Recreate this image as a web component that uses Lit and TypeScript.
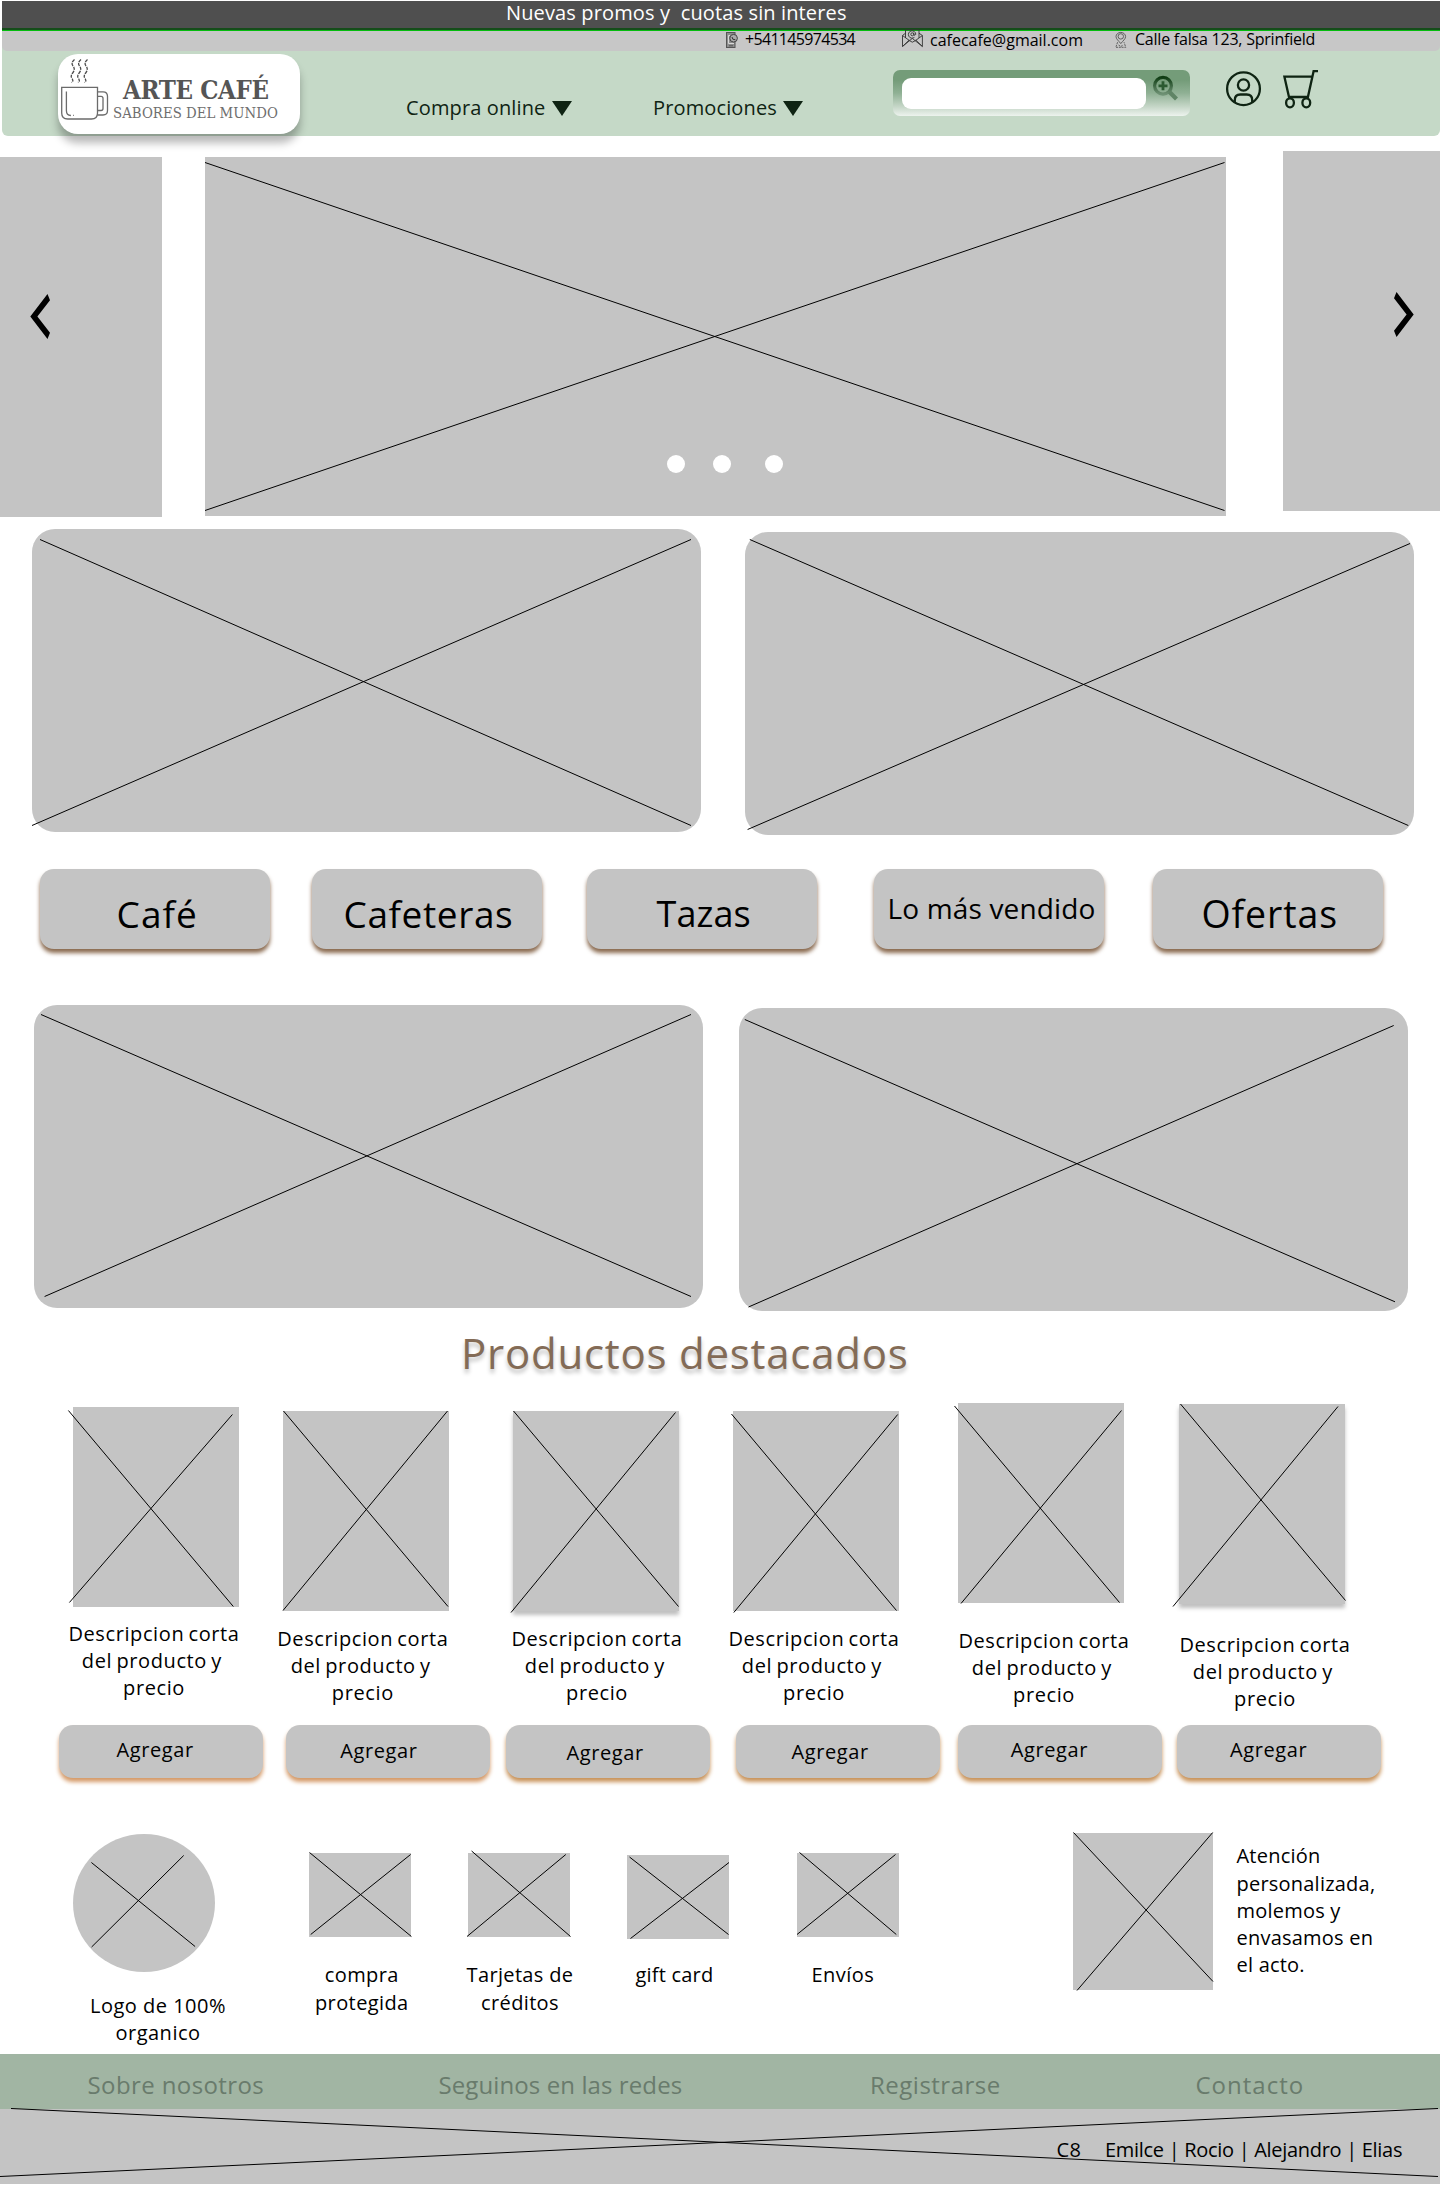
import { LitElement, html, css, svg } from "lit";
import { customElement, property } from "lit/decorators.js";

type Line = [number, number, number, number];

/** Grey image placeholder crossed by two diagonals. */
@customElement("image-slot")
export class ImageSlot extends LitElement {
  @property({ attribute: false }) lines: Line[] = [];

  static styles = css`
    :host { display: block; position: relative; background: #c4c4c4; flex: none; box-sizing: border-box; }
    .cross { position: absolute; left: 0; top: 0; width: 100%; height: 100%; overflow: visible; }
    .cross line { stroke: #000; stroke-width: 1; }
  `;

  render() {
    return html`<svg class="cross">
        ${this.lines.map(([a, b, c, d]) => svg`<line x1=${a} y1=${b} x2=${c} y2=${d}></line>`)}
      </svg><slot></slot>`;
  }
}

const products: Line[][] = [
  [[-4.6, 3.5, 160.3, 199.5], [-3.6, 195.5, 159.4, 7.5]],
  [[0.5, 0, 165, 195.5], [0, 199.5, 164.5, 0]],
  [[0.5, 0, 165.5, 195.5], [-2, 201.5, 162.5, 1.5]],
  [[-1.5, 3, 163.5, 199.5], [0.8, 201.5, 164.7, 3.5]],
  [[-3.5, 3, 161.5, 199.5], [3, 200.5, 163.5, 7.5]],
  [[1.5, 0, 166.5, 196.5], [-6, 202.5, 159, 2.5]],
];

@customElement("app-root")
export class AppRoot extends LitElement {
  static styles = css`
    :host {
      display: block; width: 1440px; height: 2187px; overflow: hidden; background: #fff; color: #000;
      font-family: "Open Sans", "Noto Sans", sans-serif; font-size: 20px; line-height: 27.2px;
      letter-spacing: 0.5px;
    }
    * { box-sizing: border-box; }
    svg { display: block; flex: none; overflow: visible; }
    button { font: inherit; letter-spacing: inherit; color: inherit; border: 0; margin: 0; text-align: left; display: block; }

    .promo {
      margin: 1px 0 0 2px; height: 30px; background: #4f4f4f;
      border-bottom: 1px solid #04bc0e; box-shadow: inset 0 -2px 0 #154d1a;
      color: #fff; padding-left: 504px; line-height: 24.5px; letter-spacing: 0.13px; white-space: pre;
    }
    .top { display: flow-root; }
    .contact {
      display: flex; align-items: flex-start; height: 20px; margin-left: 2px; background: #c7c7c7;
      border-radius: 0 0 5px 5px; font-size: 16px; line-height: 17px; white-space: nowrap;
    }
    .under { background: linear-gradient(90deg, #fff 2px, #c5d9c7 2px); }
    .ic-phone { margin: 1px 7px 0 724px; }
    .phone { width: 157px; letter-spacing: -0.68px; }
    .ic-mail { margin: -2px 7px 0 0; }
    .mail { width: 186px; margin-top: 0.7px; letter-spacing: 0; }
    .ic-pin { margin: 1px 7px 0 -1px; }
    .place { letter-spacing: -0.22px; margin-left: 1px; }

    .nav {
      display: flex; align-items: flex-start; height: 85px; margin-left: 2px; background: #c5d9c7;
      border-radius: 0 0 6px 6px; color: #0f2413;
    }
    .brand {
      display: flex; width: 242px; height: 80px; margin: 3px 0 0 56px; border-radius: 20px; background: #fff;
      box-shadow: 0 9px 9px rgba(0, 0, 0, 0.28); flex: none;
    }
    .brand-text { width: 190px; margin-left: 1px; white-space: nowrap; font-family: "DejaVu Serif Condensed", "DejaVu Serif", serif; color: #565656; }
    .brand-name { font-size: 25.5px; font-weight: bold; line-height: 30px; margin: 21px 0 0 12px; letter-spacing: -0.35px; color: #555; }
    .brand-sub { font-size: 14.8px; line-height: 18px; margin: -1px 0 0 2px; letter-spacing: 0.03px; color: #6e6e6e; }
    .menu { display: flex; margin-top: 42px; letter-spacing: 0.13px; white-space: nowrap; }
    .menu svg { margin-top: 8px; }
    .menu .label { flex: none; padding-top: 0.8px; }
    .shop { margin-left: 106px; }
    .shop .label { width: 146px; }
    .deals { margin-left: 81px; }
    .deals .label { width: 130px; }
    .search {
      display: flex; width: 297px; height: 46px; margin: 19px 0 0 90px; border-radius: 7px; flex: none;
      background: linear-gradient(#749c79 22%, #8fb094 50%, #c6d7c8 80%, #edf3ee); padding: 7.5px 0 0 9px;
    }
    .field { width: 244px; height: 31.5px; border-radius: 9px; background: #fff; flex: none; }
    .search svg { margin: -3px 0 0 6px; }
    .user { margin: 19.5px 0 0 36px; }
    .cart { margin: 19px 0 0 22px; }

    .carousel { display: flex; align-items: flex-start; padding-top: 15px; height: 381px; }
    .prev { width: 162px; height: 360px; margin-top: 6px; padding: 137px 0 0 30px; }
    .hero { width: 1021px; height: 359px; margin: 6px 57px 0 43px; }
    .next { width: 157px; height: 360px; padding: 141px 0 0 111px; }
    .dots { position: absolute; left: 462px; top: 298px; display: flex; }
    .dot { width: 18px; height: 18px; border-radius: 50%; background: #fff; margin-right: 28px; }
    .dot:nth-child(2) { margin-right: 34px; }

    .banners { display: flex; align-items: flex-start; height: 306px; }
    .banner { width: 669px; height: 303px; border-radius: 23px; }
    .banner:last-child { margin-top: 3px; }
    .first { margin-top: 12px; padding-left: 32px; gap: 44px; }
    .second { margin-top: 56px; padding-left: 34px; gap: 36px; }

    .cats { display: flex; margin-top: 34px; height: 80px; padding-left: 39.5px; }
    .cat {
      width: 230px; height: 80px; padding: 0; border-radius: 14px; background: #c4c4c4; flex: none;
      box-shadow: 0 4px 4px #8a6a4f; font-size: 36px; line-height: 90px; white-space: nowrap; overflow: visible;
    }
    .cat span { display: block; height: 80px; }
    .cat:nth-child(1) { padding-left: 77px; letter-spacing: 1.1px; font-size: 37px; }
    .cat:nth-child(2) { padding-left: 32px; letter-spacing: 0.6px; font-size: 37px; margin-left: 42px; }
    .cat:nth-child(3) { padding-left: 70px; letter-spacing: 0.1px; margin-left: 45px; }
    .cat:nth-child(4) { padding-left: 14px; letter-spacing: 0.15px; margin-left: 57px; font-size: 28px; line-height: 79px; }
    .cat:nth-child(5) { padding-left: 49px; letter-spacing: 0.9px; font-size: 37.5px; margin-left: 49px; }

    .title {
      margin: 0; padding-left: 461px; font-size: 42px; font-weight: 400; line-height: 83px; height: 83px; letter-spacing: 0.75px;
      color: #836b56; text-shadow: 0 4px 4px rgba(0, 0, 0, 0.25);
    }

    .products { display: flex; height: 375px; margin-top: 9px; }
    .product { display: flex; flex-direction: column; width: 204px; height: 375px; flex: none; }
    .thumb { width: 166px; height: 200px; }
    .desc { margin: 0; padding-top: 1px; width: 190px; text-align: center; white-space: pre-line; flex: none; word-spacing: -1.5px; letter-spacing: 0.6px; }
    .add {
      width: 203.5px; height: 53px; margin-top: auto; padding: 0; border-radius: 14px; background: #c4c4c4;
      box-shadow: 0 4px 4px #c9935a; flex: none; letter-spacing: 0.6px;
    }
    .add span { display: block; height: 53px; padding-top: 0.6px; }
    .product:nth-child(1) { margin-left: 59px; }
    .product:nth-child(1) .thumb { margin: 4px 0 12px 14px; }
    .product:nth-child(1) .add { padding-left: 57.5px; line-height: 48px; box-shadow: 0 4px 4px #d59a68; }
    .product:nth-child(2) { margin-left: 20px; }
    .product:nth-child(2) .thumb { margin: 8px 0 13px 0; }
    .product:nth-child(2) .desc { margin-left: -15.2px; }
    .product:nth-child(2) .add { margin-left: 3px; padding-left: 54.2px; line-height: 50px; box-shadow: 0 4px 4px #d59a68; }
    .product:nth-child(3) { margin-left: 19px; }
    .product:nth-child(3) .thumb { margin: 8px 0 12.6px 7px; box-shadow: 0 4px 4px rgba(0, 0, 0, 0.25); }
    .product:nth-child(3) .desc { margin-left: -4px; }
    .product:nth-child(3) .add { padding-left: 60.5px; line-height: 54.5px; }
    .product:nth-child(4) { margin-left: 23px; }
    .product:nth-child(4) .thumb { margin: 8px 0 12.6px 0; }
    .product:nth-child(4) .desc { margin-left: -14px; }
    .product:nth-child(4) .add { margin-left: 3px; padding-left: 55.5px; line-height: 52.5px; }
    .product:nth-child(5) { margin-left: 21px; }
    .product:nth-child(5) .thumb { margin: 0 0 22.6px 0; }
    .product:nth-child(5) .desc { margin-left: -9px; }
    .product:nth-child(5) .add { padding-left: 52.7px; line-height: 48.5px; }
    .product:nth-child(6) { margin-left: 15px; }
    .product:nth-child(6) .thumb { margin: 1px 0 25.6px 2px; box-shadow: 0 4px 4px rgba(0, 0, 0, 0.25); }
    .product:nth-child(6) .desc { margin-left: -7px; }
    .product:nth-child(6) .add { padding-left: 53px; line-height: 48.5px; }

    .perks { display: flex; align-items: flex-start; height: 221px; margin-top: 55px; }
    .perk { margin: 0; width: 102px; flex: none; }
    .perk figcaption { width: 140px; padding-top: 0.8px; text-align: center; white-space: pre-line; }
    .square { width: 102px; height: 84px; }
    .organic { width: 142px; margin: 1px 0 0 73px; }
    .round { width: 142px; height: 138px; border-radius: 50%; }
    .organic figcaption { width: 160px; margin: 19.3px 0 0 5px; }
    .secure { margin: 20px 0 0 94px; }
    .secure figcaption { margin: 23.6px 0 0 -17.2px; letter-spacing: 0.4px; }
    .cards { margin: 20px 0 0 57px; }
    .cards figcaption { margin: 23.6px 0 0 -18px; letter-spacing: 0.35px; }
    .gift { margin: 22px 0 0 57px; }
    .gift figcaption { margin: 21.6px 0 0 -22.5px; letter-spacing: 0.2px; }
    .ship { margin: 20px 0 0 68px; }
    .ship figcaption { margin: 23.6px 0 0 -24.1px; }
    .care { width: 140px; height: 157px; margin-left: 174px; }
    .care-text { margin: 9.4px 0 0 23.5px; white-space: pre-line; letter-spacing: 0.22px; }

    .links { display: flex; height: 55px; padding-left: 87.5px; background: #a1b5a3; color: #697b6c; font-size: 24px; line-height: 62.5px; white-space: nowrap; }
    .links :nth-child(1) { width: 351px; letter-spacing: 0.4px; }
    .links :nth-child(2) { width: 431.5px; letter-spacing: 0.1px; }
    .links :nth-child(3) { width: 325.5px; letter-spacing: 0.5px; }
    .links :nth-child(4) { letter-spacing: 1px; }
    .credits { display: flex; height: 75px; width: 1440px; padding-left: 1056.5px; line-height: 82px; white-space: nowrap; }
    .group { width: 48.5px; letter-spacing: 0.4px; }
    .names { letter-spacing: -0.3px; }
  `;

  private header() {
    return html`
      <header class="top">
        <div class="promo">Nuevas promos y  cuotas sin interes</div>
        <div class="under">
          <div class="contact">
            <svg class="ic-phone" width="12" height="16" viewBox="0 0 12 16" fill="none" stroke="#555" stroke-width="1">
              <rect x="0.5" y="0.5" width="8.5" height="15" fill="#8d8d8d"></rect>
              <path d="M2.5 3.5h2M2.5 3.5v8h5.5" stroke="#d8d8d8"></path>
              <circle cx="7.6" cy="6.2" r="3.8" fill="#aaa" stroke="#444"></circle>
              <path d="M6 5q0 3 3.4 2.8" stroke="#333"></path>
              <path d="M3 13.8h4" stroke="#555"></path>
            </svg>
            <span class="phone">+541145974534</span>
            <svg class="ic-mail" width="21" height="18" viewBox="0 0 21 18" fill="none" stroke="#333" stroke-width="0.9">
              <path d="M3.5 9V0.8h13.5V9"></path>
              <path d="M3.5 4.2 0.5 6.5V17.5L7.2 11M17 4.2l3.4 2.3v11L13.8 11"></path>
              <path d="M0.5 6.5 7.5 11.6 10.3 13.2 13.4 11.6 20.4 6.5M0.5 17.5 10.3 9.4l10.1 8.1"></path>
              <circle cx="10.3" cy="5.3" r="1.5"></circle>
              <path d="M11.8 3.8v2q1.4 1.2 2-.6A3.7 3.7 0 1 0 12.4 8.4"></path>
            </svg>
            <span class="mail">cafecafe@gmail.com</span>
            <svg class="ic-pin" width="12" height="16" viewBox="0 0 12 16" fill="none" stroke="#555" stroke-width="0.9">
              <path d="M5.8 11.6C3.5 8.6 1 7 1 4.6a4.8 4.2 0 0 1 9.6 0C10.600 7 8 8.600 5.800 11.600z"></path>
              <circle cx="5.8" cy="4.4" r="2.7"></circle>
              <path d="M2.600 10.200 0.800 15.300h10L9 10.200M3.500 13l2.300 1.500L8.200 13" stroke-dasharray="2 0.8"></path>
            </svg>
            <span class="place">Calle falsa 123, Sprinfield</span>
          </div>
        </div>
        <nav class="nav">
          <div class="brand">
            <svg width="52" height="80" viewBox="58 54 52 80" fill="none" stroke="#6b6b6b" stroke-width="1.3">
              <path d="M61.700 87.300H97.500V113q0 6-6 6H67.700q-6 0-6-6z"></path>
              <path d="M66.400 91.500V110.500q0 5 4.500 5"></path>
              <path d="M73 115.400h.8"></path>
              <path d="M97.500 91.800h5.500q4.500 0 4.500 4.500V110.500q0 4.500-4.500 4.500h-5.500"></path>
              <path d="M97.500 96.300h3.500q2 0 2 2V108.500q0 2-2 2h-3.500"></path>
              <g stroke="#4a4a4a" stroke-dasharray="3.200 1">
                <path d="M74.500 59.500q-4 3.500-1.500 6.500t0 6.500q-3 3.500-1 6t-.5 4"></path>
                <path d="M81 59.500q-4 3.500-1.500 6.500t0 6.500q-3 3.500-1 6t-.5 4"></path>
                <path d="M87.500 59.500q-4 3.500-1.500 6.500t0 6.500q-3 3.500-1 6t-.5 4"></path>
              </g>
            </svg>
            <div class="brand-text">
              <div class="brand-name">ARTE CAFÉ</div>
              <div class="brand-sub">SABORES DEL MUNDO</div>
            </div>
          </div>
          <div class="menu shop"><span class="label">Compra online</span>
            <svg width="20" height="15"><path d="M0 0H20L10 15z" fill="#0f2413"></path></svg></div>
          <div class="menu deals"><span class="label">Promociones</span>
            <svg width="20" height="15"><path d="M0 0H20L10 15z" fill="#0f2413"></path></svg></div>
          <div class="search">
            <div class="field"></div>
            <svg width="28" height="28" viewBox="1152 74.500 28 28" fill="none">
              <defs><linearGradient id="glass" x1="0" y1="0" x2="0" y2="1"><stop offset="0" stop-color="#0f3d14"></stop><stop offset="1" stop-color="#6f9275"></stop></linearGradient></defs>
              <circle cx="1163" cy="85.300" r="8.400" stroke="url(#glass)" stroke-width="3.200"></circle>
              <path d="M1163 80.800v9M1158.500 85.300h9" stroke="#2b5a31" stroke-width="2.800"></path>
              <path d="M1169.500 91.500 1176.500 98.500" stroke="#5f8465" stroke-width="4.200"></path>
            </svg>
          </div>
          <svg class="user" width="35" height="35" viewBox="0 0 35 35" fill="none" stroke="#0f2413" stroke-width="2.300">
            <circle cx="17.500" cy="17.700" r="16.400"></circle>
            <circle cx="17.500" cy="14" r="5.600"></circle>
            <path d="M8.800 31.500V29q0-5.500 5.500-5.500h6.400q5.500 0 5.500 5.500v2.500"></path>
          </svg>
          <svg class="cart" width="36" height="39" viewBox="0 0 36 39" fill="none" stroke="#0f2413" stroke-width="2.300">
            <path d="M35 1.200H30.600L24.900 27H6L1.400 6.700H29"></path>
            <ellipse cx="7" cy="32.800" rx="3.900" ry="4.500"></ellipse>
            <ellipse cx="23.300" cy="32.800" rx="3.900" ry="4.500"></ellipse>
          </svg>
        </nav>
      </header>`;
  }

  render() {
    return html`
      ${this.header()}
      <section class="carousel">
        <image-slot class="prev">
          <svg width="20" height="45"><path d="M17.500 0 20 6.300 7.400 22.500 20 38.700 17.500 45 0.300 22.500z"></path></svg>
        </image-slot>
        <image-slot class="hero" .lines=${[[0, 5.5, 1019.5, 353.5], [0, 353.5, 1019.5, 5.5]]}>
          <div class="dots"><i class="dot"></i><i class="dot"></i><i class="dot"></i></div>
        </image-slot>
        <image-slot class="next">
          <svg width="20" height="45"><path d="M2.500 0 0 6.300 12.600 22.500 0 38.700 2.500 45 19.700 22.500z"></path></svg>
        </image-slot>
      </section>

      <section class="banners first">
        <image-slot class="banner" .lines=${[[8, 10.5, 659, 296.5], [0, 296.5, 659, 10.5]]}></image-slot>
        <image-slot class="banner" .lines=${[[4.8, 7.5, 663.3, 293.5], [2.6, 297.5, 665, 11.5]]}></image-slot>
      </section>

      <nav class="cats">
        ${["Café", "Cafeteras", "Tazas", "Lo más vendido", "Ofertas"].map(
          (c) => html`<button class="cat"><span>${c}</span></button>`
        )}
      </nav>

      <section class="banners second">
        <image-slot class="banner" .lines=${[[7, 9.5, 657, 291.5], [10.6, 291.5, 657, 9.5]]}></image-slot>
        <image-slot class="banner" .lines=${[[5.8, 11.5, 656, 293.8], [9.5, 299, 654.7, 17.5]]}></image-slot>
      </section>

      <h2 class="title">Productos destacados</h2>

      <section class="products">
        ${products.map(
          (lines) => html`<article class="product">
            <image-slot class="thumb" .lines=${lines}></image-slot>
            <p class="desc">${"Descripcion corta\ndel producto y\u00a0\nprecio"}</p>
            <button class="add"><span>Agregar</span></button>
          </article>`
        )}
      </section>

      <section class="perks">
        <figure class="perk organic">
          <image-slot class="round" .lines=${[[18.4, 28.5, 122.1, 112.5], [18.6, 113, 110.7, 21.5]]}></image-slot>
          <figcaption>${"Logo de 100%\norganico"}</figcaption>
        </figure>
        <figure class="perk secure">
          <image-slot class="square" .lines=${[[0.5, -0.5, 102.4, 83.5], [1.7, 81.5, 101.6, 1.5]]}></image-slot>
          <figcaption>${"compra\nprotegida"}</figcaption>
        </figure>
        <figure class="perk cards">
          <image-slot class="square" .lines=${[[3.6, -2, 102.5, 83.5], [-1, 83.5, 97.8, 1.5]]}></image-slot>
          <figcaption>${"Tarjetas de\ncréditos"}</figcaption>
        </figure>
        <figure class="perk gift">
          <image-slot class="square" .lines=${[[2.5, 2, 101.5, 79.5], [3.5, 83.5, 102, 7.5]]}></image-slot>
          <figcaption>gift card</figcaption>
        </figure>
        <figure class="perk ship">
          <image-slot class="square" .lines=${[[2.5, -0.5, 99.3, 81.5], [0, 81.5, 98.5, 1.5]]}></image-slot>
          <figcaption>Envíos</figcaption>
        </figure>
        <image-slot class="care" .lines=${[[0.5, -0.5, 140, 148.5], [4, 157.5, 139.7, -0.5]]}></image-slot>
        <div class="care-text">${"Atención\npersonalizada,\nmolemos y\nenvasamos en\nel acto."}</div>
      </section>

      <footer>
        <nav class="links">
          <span>Sobre nosotros</span><span>Seguinos en las redes</span><span>Registrarse</span><span>Contacto</span>
        </nav>
        <image-slot class="credits" .lines=${[[11, -0.5, 1438, 67.5], [0, 67.5, 1438, -0.5]]}>
          <span class="group">C8</span><span class="names">Emilce | Rocio | Alejandro | Elias</span>
        </image-slot>
      </footer>
    `;
  }
}
